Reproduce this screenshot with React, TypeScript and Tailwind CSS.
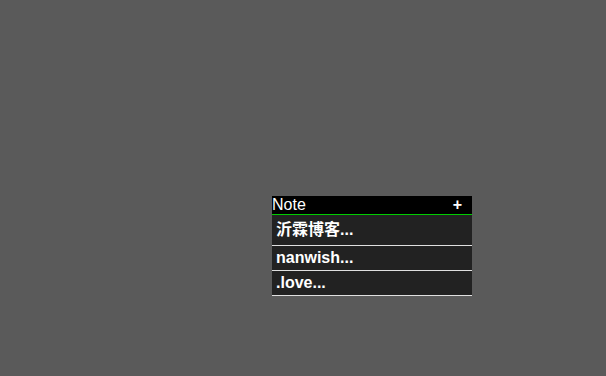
import React from "react";

export default function App() {
  const font = { fontFamily: '"Liberation Sans", Arial, "Noto Sans CJK SC", sans-serif' };
  const rows = ["沂霖博客...", "nanwish...", ".love..."];
  return (
    <div className="w-[606px] h-[376px] bg-[#5a5a5a] pt-[196px] pl-[272px]" style={font}>
      <div className="w-[200px] flex flex-col">
        <div className="h-[18px] bg-black flex items-center justify-between text-white text-[16px] leading-[18px] border-b border-[#00cc00] box-content">
          <span>Note</span>
          <span className="font-bold text-[16px] mr-[10px]">+</span>
        </div>
        {rows.map((r, i) => (
          <div
            key={i}
            className={`bg-[#222222] text-white font-bold text-[16px] flex items-center px-[4px] border-b border-[#e0e0e0] box-content ${i === 0 ? "h-[30px]" : "h-[24px]"}`}
          >
            {r}
          </div>
        ))}
      </div>
    </div>
  );
}
